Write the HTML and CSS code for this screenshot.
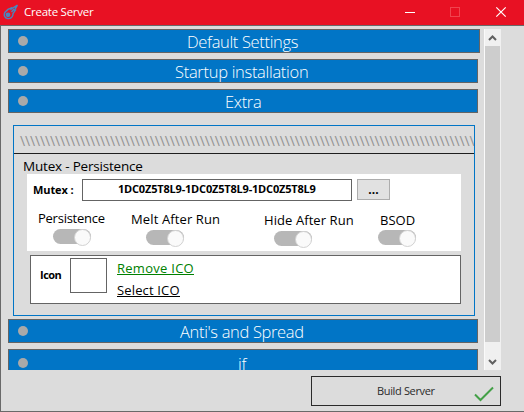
FILE: index.html
```html
<!DOCTYPE html>
<html lang="en">
<head>
<meta charset="utf-8">
<title>Create Server</title>
<link rel="stylesheet" href="styles.css">
</head>
<body>
<div class="window">
  <header class="titlebar">
    <svg class="logo" width="16" height="16" viewBox="0 0 16 16" fill="none" stroke="#4b86bd" stroke-width="1.4">
      <path d="M2.2 8 5 5.4 8.4 4 8.2 5 14.4 1.2 11.4 6.4 12.2 6.4 10 9.6C10.2 13 7.6 14.8 4.8 14.6 1.6 14.2 .2 11 2.2 8Z"/>
      <circle cx="5" cy="10.8" r="1.7" fill="#4b86bd"/><path d="M8.5 8 11 5"/>
    </svg>
    <h1 class="title">Create Server</h1>
    <svg class="controls" width="106" height="25" viewBox="0 0 106 25" fill="none">
      <path d="M0 12.5h10" stroke="#fff"/>
      <rect x="45.5" y="7.5" width="9" height="9" stroke="#f0444f"/>
      <path d="M91.3 7.3l9.4 9.4M100.7 7.3l-9.4 9.4" stroke="#fff" stroke-width="1.2"/>
    </svg>
  </header>
  <main class="body">
    <div class="scroll-area">
      <div class="sections">
        <div class="bar bar-wide"><i class="dot"></i><span class="bar-text t-default">Default Settings</span></div>
        <div class="bar"><i class="dot"></i><span class="bar-text t-startup">Startup installation</span></div>
        <div class="bar"><i class="dot"></i><span class="bar-text t-extra">Extra</span></div>
        <section class="panel">
          <div class="hatch">\\\\\\\\\\\\\\\\\\\\\\\\\\\\\\\\\\\\\\\\\\\\\\\\\\\\\\\\\\\\\\\\\\\\\\\\\\\\\\\\\\\\\\\\\\\</div>
          <h2 class="panel-title">Mutex - Persistence</h2>
          <div class="card">
            <div class="mutex-row">
              <span class="mutex-label">Mutex :</span>
              <div class="mutex-input"><span class="mutex-value">1DC0Z5T8L9-1DC0Z5T8L9-1DC0Z5T8L9</span></div>
              <button class="more">...</button>
            </div>
            <div class="options">
              <div class="option o-persist"><span class="option-text">Persistence</span><i class="toggle"></i></div>
              <div class="option o-melt"><span class="option-text">Melt After Run</span><i class="toggle"></i></div>
              <div class="option o-hide"><span class="option-text">Hide After Run</span><i class="toggle"></i></div>
              <div class="option o-bsod"><span class="option-text">BSOD</span><i class="toggle"></i></div>
            </div>
          </div>
          <div class="icon-card">
            <span class="icon-label">Icon</span>
            <div class="icon-box"></div>
            <div class="links"><a class="link remove">Remove ICO</a><a class="link select">Select ICO</a></div>
          </div>
        </section>
        <div class="bar bar-after"><i class="dot"></i><span class="bar-text t-anti">Anti's and Spread</span></div>
        <div class="bar bar-last"><i class="dot"></i><span class="bar-text t-if">if</span></div>
      </div>
      <div class="scrollbar">
        <svg class="arrow" width="15" height="17" viewBox="0 0 15 17" fill="none" stroke="#606060" stroke-width="2"><path d="M4 11 7.5 7.5 11 11"/></svg>
        <div class="thumb"></div>
        <svg class="arrow" width="15" height="28" viewBox="0 0 15 28" fill="none" stroke="#606060" stroke-width="2"><path d="M4 18 7.5 21.5 11 18"/></svg>
      </div>
    </div>
    <button class="build"><span class="build-text">Build Server</span>
      <svg class="check" width="20" height="16" viewBox="0 0 20 16" fill="none" stroke="#43a047" stroke-width="2"><path d="M1 8.5 6.5 14 19 1.5"/></svg>
    </button>
  </main>
</div>
</body>
</html>
```
FILE: styles.css
```css
* { box-sizing: border-box; }
body {
  margin: 0;
  font-family: "Open Sans", "Noto Sans", sans-serif;
  color: #000;
}
h1, h2 { margin: 0; font-weight: 400; }
button { padding: 0; font-family: inherit; color: inherit; border-radius: 0; }
.window { width: 524px; height: 412px; overflow: hidden; background: #dcdcdc; white-space: nowrap; }
.titlebar { display: flex; height: 25px; background: #e81123; color: #fff; padding-left: 3px; }
.logo { margin-top: 4px; }
.title { margin-left: 5px; font-size: 11.5px; line-height: 23px; letter-spacing: -0.25px; flex: 1; }
.controls { margin-right: 13px; }
.body { height: 387px; border: solid #696969; border-width: 1px 0 1px 1px; padding: 3px 0 0 7px; }
.scroll-area { display: flex; height: 341px; overflow: hidden; }
.sections { width: 476px; height: 341px; overflow: hidden; }
.bar {
  display: grid;
  grid-template-columns: 20px 1fr;
  align-items: center;
  width: 470px;
  height: 24px;
  margin-bottom: 6px;
  padding-left: 9px;
  border: 1px solid #646464;
  background: #0175c6;
  color: #fff;
}
.bar-wide { width: 472px; }
.dot { width: 10px; height: 10px; border-radius: 50%; background: #a9a9a9; }
.bar-text { font-size: 16.5px; line-height: 22px; font-weight: 300; letter-spacing: -0.34px; padding-top: 1px; margin-bottom: -1px; }
.t-default { padding-left: 149px; }
.t-startup { padding-left: 137px; letter-spacing: -0.3px; }
.t-extra { padding-left: 187px; }
.t-anti { padding-left: 142px; }
.t-if { padding-left: 200px; }
.panel {
  width: 462px;
  height: 191px;
  margin: 12px 0 0 5px;
  border: 1px solid #0175c6;
}
.hatch {
  height: 28px;
  padding-left: 6px;
  overflow: hidden;
  border-bottom: 1px solid #1e1e1e;
  color: #929292;
  font-size: 14px;
  line-height: 29px;
  letter-spacing: -0.14px;
}
.panel-title { margin-left: 9px; font-size: 13.5px; line-height: 20px; height: 20px; padding-top: 2px; letter-spacing: -0.2px; }
.card { width: 434px; height: 77px; margin-left: 13px; background: #fff; padding-top: 5px; }
.mutex-row { display: flex; height: 22px; padding-left: 6px; }
.mutex-label { width: 49px; font-size: 11px; line-height: 21px; font-weight: 700; letter-spacing: -0.1px; }
.mutex-input { width: 270px; height: 22px; border: 1px solid #646464; padding-left: 35px; }
.mutex-value { display: block; font-size: 11px; line-height: 17px; font-weight: 700; letter-spacing: -0.19px; }
.more { width: 33px; height: 21px; margin-left: 5px; border: 1px solid #adadad; background: #e1e1e1; font-size: 12px; line-height: 18px; font-weight: 700; }
.options { display: flex; align-items: flex-start; }
.option { display: flex; flex-direction: column; }
.option-text { font-size: 13px; line-height: 20px; height: 20px; }
.o-persist { width: 93px; margin-left: 11px; padding-top: 7px; letter-spacing: -0.25px; }
.o-melt { width: 133px; padding-top: 8px; letter-spacing: 0.12px; }
.o-hide { width: 115px; padding-top: 9px; letter-spacing: 0.08px; }
.o-bsod { padding-top: 8px; }
.o-bsod .option-text { padding: 1px 0 0 1px; }
.toggle {
  display: flex;
  justify-content: flex-end;
  width: 38px;
  height: 15px;
  margin-top: 1px;
  border-radius: 7.5px;
  background: #b7b7b7;
}
.toggle::after { content: ""; width: 15px; height: 15px; border: 1px solid #d2d2d2; border-radius: 50%; background: #fafafa; }
.o-persist .toggle { margin-left: 15px; }
.o-melt .toggle { margin-left: 15px; }
.o-hide .toggle { margin-left: 10px; }
.o-bsod .toggle { margin-left: -1px; }
.icon-card { display: flex; width: 431px; height: 49px; margin: 4px 0 0 16px; border: 1px solid #646464; background: #fff; padding-left: 9px; }
.icon-label { width: 30px; font-size: 11px; line-height: 38px; font-weight: 700; letter-spacing: -0.5px; }
.icon-box { width: 37px; height: 35px; margin-top: 2px; border: 1px solid #646464; }
.links { display: flex; flex-direction: column; align-items: flex-start; margin: 3px 0 0 10px; }
.link { font-size: 13px; line-height: 18px; height: 16px; border-bottom: 1px solid; letter-spacing: 0.27px; }
.remove { color: #008000; }
.select { margin-top: 6px; letter-spacing: 0.15px; }
.bar-after { margin-top: 3px; }
.bar-last .dot { margin-top: 4px; }
.bar-last .bar-text { line-height: 19px; padding-top: 4px; }
.scrollbar { width: 17px; height: 341px; border-right: 1px solid #f0f0f0; border-left: 1px solid #fafafa; background: #f0f0f0; }
.arrow { display: block; }
.thumb { height: 296px; background: #cdcdcd; }
.build {
  display: flex;
  width: 190px;
  height: 30px;
  margin: 6px 0 0 303px;
  border: 1px solid #2b2b2b;
  background: #dcdcdc;
  padding-left: 65px;
}
.build-text { width: 97px; text-align: left; font-size: 11px; line-height: 28px; letter-spacing: -0.35px; color: #2b2b2b; }
.check { margin-top: 9px; }
```
